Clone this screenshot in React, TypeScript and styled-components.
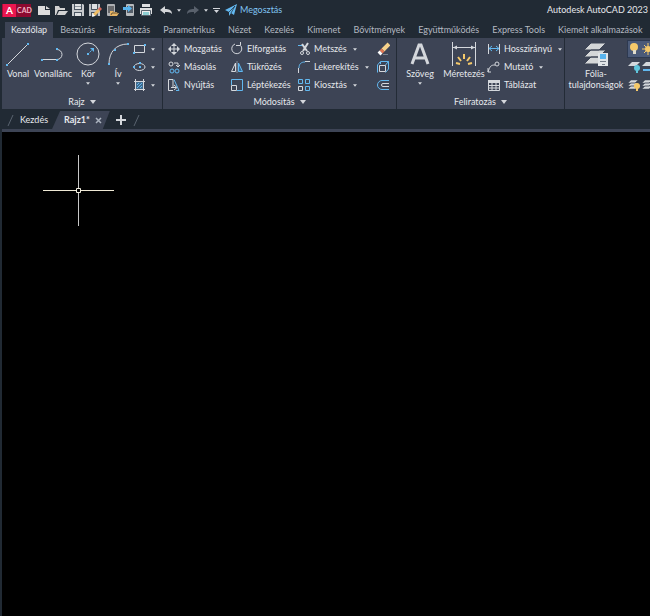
import React from "react";
import styled, { createGlobalStyle, css } from "styled-components";

const color = {
  frame: "#212a34",
  ribbon: "#3d4455",
  edge: "#232b36",
  text: "#e6e8ec",
  muted: "#b4b9c1",
  line: "#d4d7dc",
  blue: "#62b8f0",
  share: "#80c4f2",
  yellow: "#f5c96a",
};

const GlobalStyle = createGlobalStyle`
  * { box-sizing: border-box; }
  body {
    margin: 0;
    background: ${color.frame};
    color: ${color.text};
    font: 9px/12px Lato, "Noto Sans", sans-serif;
    overflow: hidden;
  }
  button {
    margin: 0;
    padding: 0;
    border: 0;
    background: none;
    color: inherit;
    font: inherit;
    white-space: nowrap;
  }
  svg { display: block; flex: none; }
`;

const Window = styled.div`
  display: flex;
  flex-direction: column;
  min-height: 100vh;
  overflow: hidden;
`;

const TitleBar = styled.header`
  display: flex;
  align-items: center;
  height: 20px;
  padding: 0 2px;
`;

const QuickAccess = styled.div<{ $inset: number }>`
  display: flex;
  align-items: center;
  gap: 4px;
  margin-left: ${(p) => p.$inset}px;
`;

const ToolButton = styled.button<{ $narrow?: boolean }>`
  display: flex;
  justify-content: center;
  width: ${(p) => (p.$narrow ? "6px" : "13px")};
`;

const ShareButton = styled.button`
  display: flex;
  align-items: center;
  gap: 3px;
  margin-left: 6px;
  color: ${color.share};
`;

const AppTitle = styled.h1`
  margin: 0 0 0 auto;
  font: inherit;
  white-space: nowrap;
`;

const RibbonTabs = styled.nav`
  display: flex;
  align-items: flex-end;
  gap: 1px;
  height: 18px;
  padding-left: 5px;
`;

const RibbonTab = styled.button<{ $active?: boolean }>`
  flex: none;
  height: 16px;
  padding: 0 6px;
  color: ${color.muted};
  ${(p) =>
    p.$active &&
    css`
      background: ${color.ribbon};
      color: ${color.text};
    `}
`;

const Ribbon = styled.div`
  display: flex;
  height: 71px;
  margin-left: 2px;
  background: ${color.ribbon};
`;

const Panel = styled.section<{ $width?: number }>`
  display: flex;
  flex-direction: column;
  justify-content: space-between;
  flex: ${(p) => (p.$width ? `0 0 ${p.$width}px` : "1 0 0")};
  min-width: 0;
  overflow: hidden;
  padding: 2px 0 0;
  & + & { border-left: 1px solid ${color.edge}; }
`;

const PanelBody = styled.div<{ $inset?: number }>`
  display: flex;
  padding-left: ${(p) => p.$inset ?? 0}px;
`;

const PanelTitle = styled.button`
  display: flex;
  align-items: center;
  justify-content: center;
  gap: 5px;
  height: 14px;
`;

const LargeButton = styled.button<{ $width: number }>`
  display: flex;
  flex-direction: column;
  align-items: center;
  flex: 0 0 ${(p) => p.$width}px;
  height: 52px;
`;

const LargeLabel = styled.span<{ $tight?: boolean }>`
  margin-bottom: 2px;
  line-height: ${(p) => (p.$tight ? "11px" : "12px")};
  text-align: center;
`;

const Column = styled.div<{ $width: number }>`
  display: flex;
  flex-direction: column;
  flex: 0 0 ${(p) => p.$width}px;
`;

const SmallButton = styled.button<{ $gap?: number }>`
  display: flex;
  align-items: center;
  gap: ${(p) => p.$gap ?? 3}px;
  height: 18px;
`;

const ArrowSlot = styled.span`
  margin-left: 3px;
`;

const LayerStates = styled.div`
  display: flex;
  flex-direction: column;
`;

const LayerRow = styled.div<{ $selected?: boolean }>`
  display: flex;
  align-items: center;
  gap: 1px;
  height: 18px;
  background: ${(p) => (p.$selected ? "#4b5a78" : "none")};
  box-shadow: ${(p) => (p.$selected ? "inset 0 0 0 1px #2d3950" : "none")};
`;

const FileTabs = styled.nav`
  display: flex;
  align-items: center;
  height: 20px;
  padding: 2px 0 0 7px;
`;

const FileTab = styled.button`
  padding: 0 4px 0 6px;
`;

const ActiveFileTab = styled.div`
  display: flex;
  align-items: center;
  gap: 5px;
  height: 18px;
  padding: 0 8px 0 12px;
  background: ${color.ribbon};
  clip-path: polygon(8px 0, 100% 0, calc(100% - 7px) 100%, 0 100%);
  font-weight: 700;
`;

const NewTab = styled.button`
  margin: 0 7px 0 6px;
`;

const Drawing = styled.main`
  flex: 1;
  margin-left: 2px;
  padding: 23px 0 0 41px;
  border-top: 3px solid ${color.ribbon};
  background: #000;
`;

type IconProps = { w?: number; h?: number; children: React.ReactNode };
const Icon = ({ w = 14, h = 14, children }: IconProps) => (
  <svg width={w} height={h} viewBox={`0 0 ${w} ${h}`} fill="none" stroke={color.line} aria-hidden="true">
    {children}
  </svg>
);

const Arrow = ({ big }: { big?: boolean }) => (
  <svg width={big ? 6 : 4} height={big ? 4 : 3} viewBox="0 0 6 4" aria-hidden="true">
    <path d="M0 0h6L3 4z" fill={color.line} />
  </svg>
);

const Dot = ({ x, y }: { x: number; y: number }) => (
  <rect x={x - 1} y={y - 1} width="2" height="2" fill={color.blue} stroke="none" />
);

const Logo = styled.button`
  display: flex;
  align-items: center;
  height: 13px;
  background: #8c0a30;
  color: #fff;
  font-size: 7px;
  font-weight: 700;
`;

const LogoMark = styled.span`
  width: 14px;
  margin-right: 1px;
  background: #e9164f;
  font-size: 10px;
  line-height: 13px;
  border-left: 1px solid #a80c3a;
`;

const LogoName = styled.span`
  width: 14px;
  color: #f0b6c6;
`;

const quickTools = [
  {
    label: "Új",
    icon: <path d="M1 3h7v4h5v5H1zM9 3l4 3H9z" fill="#dcdcdc" stroke="none" />,
  },
  {
    label: "Megnyitás",
    icon: <path d="M1 12V3h4l1 2h5v2H4l-2 5zM3 12l2-4h9l-3 4z" fill="#d2d2d2" stroke="none" />,
  },
  {
    label: "Mentés",
    icon: (
      <>
        <path d="M1 1h11l1 1v11H1z" fill="#c9cbce" stroke="none" />
        <path d="M3 1h8v6H3zM3 9h8v4H3z" fill="#4b5561" stroke="none" />
        <path d="M4 1h6v5H4zM4 10h6v3H4z" fill="#dfe1e3" stroke="none" />
        <path d="M4 3.500h6" stroke="#8b929a" />
      </>
    ),
  },
  {
    label: "Mentés másként",
    icon: (
      <>
        <path d="M1 1h11v12H1z" fill="#bfc2c5" stroke="none" />
        <path d="M3 1h7v6H3zM3 9h7v4H3z" fill="#4b5561" stroke="none" />
        <path d="M4 1h5v5H4zM4 10h3v3H4z" fill="#dfe1e3" stroke="none" />
        <path d="M6 12l5-5" stroke="#f1bf67" strokeWidth="3" />
        <path d="M11 7l2-2" stroke="#d9685b" strokeWidth="3" />
        <path d="M4 14l1-3 2 2z" fill="#fff" stroke="none" />
      </>
    ),
  },
  {
    label: "Megnyitás webről és mobilról",
    icon: (
      <>
        <rect x="2" y="1" width="8" height="12" rx="1" fill="#aeb0b3" stroke="none" />
        <path d="M3 3h6v7H3z" fill="#68696c" stroke="none" />
        <path d="M5 13V8h3l1 1h3v1h2l-2 3z" fill="#e6b465" stroke="none" />
        <path d="M6 12l1-2h6" stroke="#6b5638" />
      </>
    ),
  },
  {
    label: "Mentés webre és mobilra",
    icon: (
      <>
        <rect x="4" y="1" width="8" height="12" rx="1" fill="#b7babd" stroke="none" />
        <path d="M5 3h6v7H5z" fill="#555e69" stroke="none" />
        <path d="M1 4h5V2l4 3.500-4 3.500V7H1z" fill="#59b4ee" stroke="none" />
      </>
    ),
  },
  {
    label: "Nyomtatás",
    icon: (
      <>
        <path d="M3 1h8v3H3zM1 5h12v6H1z" fill="#dedfe1" stroke="none" />
        <path d="M2.500 7.500h9v5h-9z" fill="#eee" stroke="#59636e" />
        <path d="M4 9h6v3H4z" fill="#8fcfd3" stroke="none" />
      </>
    ),
  },
];

const undo = <path d="M1 7l5-4v3c4 0 7 1 7 5-2-2-4-2-7-2v2z" />;

const ribbonTabs = [
  "Kezdőlap", "Beszúrás", "Feliratozás", "Parametrikus", "Nézet", "Kezelés", "Kimenet",
  "Bővítmények", "Együttműködés", "Express Tools", "Kiemelt alkalmazások",
];

const drawTools = [
  {
    label: "Vonal", width: 32,
    icon: <><path d="M3 25L24 4" /><Dot x={3} y={25} /><Dot x={24} y={4} /></>,
  },
  {
    label: "Vonallánc", width: 38,
    icon: <><path d="M3 19.500h15a5 5 0 0 0 0-10" /><Dot x={3} y={20} /><Dot x={18} y={20} /><Dot x={18} y={9} /></>,
  },
  {
    label: "Kör", width: 32, menu: true,
    icon: (
      <>
        <circle cx="14" cy="14" r="11" />
        <path d="M14 14l5-5" stroke={color.blue} strokeDasharray="2 1" />
        <path d="M16 8h4v4z" fill={color.blue} stroke="none" />
        <Dot x={14} y={14} />
      </>
    ),
  },
  {
    label: "Ív", width: 26, menu: true,
    icon: <><path d="M5 24C5 12 12 4 24 4" /><Dot x={5} y={24} /><Dot x={11} y={10} /><Dot x={24} y={4} /></>,
  },
];

const shapeTools = [
  {
    label: "Téglalap",
    icon: <><path d="M2.500 3.500h10v7h-10z" /><Dot x={2} y={11} /><Dot x={13} y={3} /></>,
  },
  {
    label: "Ellipszis",
    icon: <><ellipse cx="7.500" cy="7" rx="5.500" ry="3.500" /><Dot x={2} y={7} /><Dot x={8} y={7} /><Dot x={8} y={3} /></>,
  },
  {
    label: "Sraffozás",
    icon: (
      <>
        <path d="M4 4h7v7H4z" fill="#426b8d" stroke="none" />
        <path d="M5 7l2-2M5 10l5-5M8 10l2-2" stroke={color.blue} />
        <path d="M3.500 1v12M11.500 1v12M2 3.500h11M2 11.500h11" />
      </>
    ),
  },
];

type SmallTool = { label: string; icon: React.ReactNode; menu?: boolean };

const modifyColumns: { width: number; tools: SmallTool[] }[] = [
  {
    width: 63,
    tools: [
      {
        label: "Mozgatás",
        icon: (
          <>
            <path d="M2 7h10M7 2v10" />
            <path d="M7 1l3 3H4zM7 13l3-3H4zM1 7l3-3v6zM13 7l-3-3v6z" fill={color.line} stroke="none" />
          </>
        ),
      },
      {
        label: "Másolás",
        icon: (
          <>
            <circle cx="4" cy="4" r="2" /><path d="M7 3h4v3M9 5l2 2 2-2" />
            <circle cx="5" cy="11" r="2" stroke={color.blue} /><circle cx="10" cy="11" r="2" stroke={color.blue} />
          </>
        ),
      },
      {
        label: "Nyújtás",
        icon: (
          <>
            <path d="M6 12.500H1.500v-11H6V9M4 9.500h5M7 7l3 2.500L7 12" />
            <path d="M7 1.500l5 11H9" stroke={color.blue} />
          </>
        ),
      },
    ],
  },
  {
    width: 67,
    tools: [
      { label: "Elforgatás", icon: <path d="M5 2a5 5 0 1 0 6 2M6 3.500h4.500V0" /> },
      {
        label: "Tükrözés",
        icon: (
          <>
            <path d="M5.500 3v8.500H1.500z" /><path d="M8.500 3v8.500h4z" fill="#356b98" stroke={color.blue} /><path d="M7 1v12" stroke="#848d9b" />
          </>
        ),
      },
      {
        label: "Léptékezés",
        icon: <><path d="M1.500 7V1.500h11v11H7" stroke={color.blue} /><path d="M1.500 7.500h5v5h-5z" /></>,
      },
    ],
  },
  {
    width: 79,
    tools: [
      {
        label: "Metszés", menu: true,
        icon: (
          <>
            <path d="M1 3.500h5" stroke={color.blue} />
            <path d="M5 2l5 7M11 1L6 9" strokeWidth="2" />
            <circle cx="5" cy="11" r="1.500" /><circle cx="11" cy="11" r="1.500" />
          </>
        ),
      },
      {
        label: "Lekerekítés", menu: true,
        icon: <><path d="M2 8c0-4 2-6 6-6" stroke={color.blue} /><path d="M1.500 13V8M8 1.500h5" /></>,
      },
      {
        label: "Kiosztás", menu: true,
        icon: (
          <>
            <path d="M1.500 8.500h4v4h-4z" />
            <path d="M1.500 1.500h4v4h-4zM8.500 1.500h4v4h-4zM8.500 8.500h4v4h-4z" stroke={color.blue} />
          </>
        ),
      },
    ],
  },
];

const modifyExtras = [
  {
    label: "Törlés",
    icon: (
      <>
        <path d="M7 8l6-6" stroke="#f6d28b" strokeWidth="4" />
        <path d="M5 10l2-2" stroke="#e27654" strokeWidth="4" />
        <path d="M3 12l2-2" stroke="#fff" strokeWidth="4" />
        <path d="M7 12.500h5" stroke="#778190" />
      </>
    ),
  },
  {
    label: "Szétvetés",
    icon: (
      <>
        <path d="M1.500 5l3-3.500h8V9l-3 3.500M9.500 5l3-3.500M4.500 2v2M1.500 5v7.500" stroke={color.blue} />
        <path d="M3.500 5.500h6v6h-6z" />
      </>
    ),
  },
  {
    label: "Párhuzamos",
    icon: (
      <>
        <path d="M13 2.500H6a4.500 4.500 0 0 0 0 9h7" stroke={color.blue} />
        <path d="M13 5.500H7a1.500 1.500 0 0 0 0 3h6" />
      </>
    ),
  },
];

const annotateTools: SmallTool[] = [
  {
    label: "Hosszirányú", menu: true,
    icon: <><path d="M1.500 2v10M12.500 2v10" /><path d="M2 6.500h10M5 4L2 6.500 5 9M9 4l3 2.500L9 9" stroke={color.blue} /></>,
  },
  {
    label: "Mutató", menu: true,
    icon: <><path d="M1 12c2-6 3-7 7-7M1 8v4h3" /><circle cx="10" cy="4" r="2" /></>,
  },
  {
    label: "Táblázat",
    icon: <><path d="M1.500 2.500h11v10h-11zM1 7.500h12M1 10h12M5 5v7M9 5v7" /><path d="M1 2h12v3H1z" fill={color.line} stroke="none" /></>,
  },
];

const SmallTools = ({ width, tools }: { width: number; tools: SmallTool[] }) => (
  <Column $width={width}>
    {tools.map((t) => (
      <SmallButton key={t.label}>
        <Icon>{t.icon}</Icon>
        {t.label}
        {t.menu && <ArrowSlot><Arrow /></ArrowSlot>}
      </SmallButton>
    ))}
  </Column>
);

const Sheets = () => (
  <path d="M1 11l3-3h7l-3 3zM1 8l3-3h7L8 8zM1 5l3-3h7L8 5z" fill={color.line} stroke={color.ribbon} strokeWidth="0.5" />
);

const Bulb = ({ x, y, fill }: { x: number; y: number; fill: string }) => (
  <>
    <circle cx={x} cy={y} r="3" fill={fill} stroke="none" />
    <path d={`M${x - 1} ${y + 2}h2v3h-2z`} fill={fill} stroke="none" />
  </>
);

const layerRows = [
  {
    label: "Fólia be", selected: true,
    first: <><circle cx="7" cy="5" r="4" fill={color.yellow} stroke="none" /><path d="M6 8h3v4H6z" fill="#e2ddcb" stroke="none" /></>,
    second: <><circle cx="7" cy="7" r="3" fill={color.yellow} stroke="none" /><path d="M7 1v12M1 7h12M3 3l8 8M11 3l-8 8" stroke={color.yellow} /></>,
  },
  {
    label: "Fólia kikapcsolása", selected: false,
    first: <><path d="M1 6l4-4h8L9 6z" fill={color.line} stroke="none" /><Bulb x={10} y={8} fill="#5fc5dc" /></>,
    second: <><path d="M1 6l4-4h8L9 6z" fill={color.line} stroke="none" /><path d="M2 10h7" stroke={color.blue} strokeWidth="2" /></>,
  },
  {
    label: "Fóliák bekapcsolása", selected: false,
    first: <><Sheets /><Bulb x={10} y={8} fill={color.yellow} /></>,
    second: <Sheets />,
  },
];

const Slash = () => (
  <Icon w={7} h={13}><path d="M1 12L6 1" stroke="#59636f" /></Icon>
);

export default function App() {
  return (
    <Window>
      <GlobalStyle />
      <TitleBar>
        <Logo aria-label="AutoCAD menü">
          <LogoMark>A</LogoMark>
          <LogoName>CAD</LogoName>
        </Logo>
        <QuickAccess $inset={6}>
          {quickTools.map((t) => (
            <ToolButton key={t.label} aria-label={t.label}><Icon>{t.icon}</Icon></ToolButton>
          ))}
        </QuickAccess>
        <QuickAccess $inset={7}>
          <ToolButton aria-label="Visszavonás"><Icon><g fill="#d5d7da" stroke="none">{undo}</g></Icon></ToolButton>
          <ToolButton $narrow aria-label="Visszavonási lista"><Arrow /></ToolButton>
          <ToolButton aria-label="Ismét">
            <Icon><g fill="#59616c" stroke="none" transform="matrix(-1 0 0 1 14 0)">{undo}</g></Icon>
          </ToolButton>
          <ToolButton $narrow aria-label="Ismétlési lista"><Arrow /></ToolButton>
          <ToolButton $narrow aria-label="Eszköztár testreszabása">
            <Icon w={7} h={7}><path d="M0 1.500h7" /><path d="M1 3h5L3.500 6z" fill={color.line} stroke="none" /></Icon>
          </ToolButton>
        </QuickAccess>
        <ShareButton>
          <Icon w={12} h={12}>
            <path d="M0 6L12 0 9 11 6 9l-2 3V8z" fill={color.blue} stroke="none" />
            <path d="M4 8l6-6-4 7" stroke={color.frame} strokeWidth="0.7" />
          </Icon>
          Megosztás
        </ShareButton>
        <AppTitle>Autodesk AutoCAD 2023</AppTitle>
      </TitleBar>

      <RibbonTabs>
        {ribbonTabs.map((t, i) => <RibbonTab key={t} $active={i === 0}>{t}</RibbonTab>)}
      </RibbonTabs>

      <Ribbon>
        <Panel $width={160}>
          <PanelBody>
            {drawTools.map((t) => (
              <LargeButton key={t.label} $width={t.width}>
                <Icon w={28} h={28}>{t.icon}</Icon>
                <LargeLabel>{t.label}</LargeLabel>
                {t.menu && <Arrow />}
              </LargeButton>
            ))}
            <Column $width={26}>
              {shapeTools.map((t) => (
                <SmallButton key={t.label} $gap={4} aria-label={t.label}><Icon w={15}>{t.icon}</Icon><Arrow /></SmallButton>
              ))}
            </Column>
          </PanelBody>
          <PanelTitle>Rajz <Arrow big /></PanelTitle>
        </Panel>

        <Panel $width={234}>
          <PanelBody $inset={4}>
            {modifyColumns.map((c) => <SmallTools key={c.width} width={c.width} tools={c.tools} />)}
            <Column $width={16}>
              {modifyExtras.map((t) => (
                <SmallButton key={t.label} aria-label={t.label}><Icon>{t.icon}</Icon></SmallButton>
              ))}
            </Column>
          </PanelBody>
          <PanelTitle>Módosítás <Arrow big /></PanelTitle>
        </Panel>

        <Panel $width={168}>
          <PanelBody $inset={2}>
            <LargeButton $width={42}>
              <Icon w={28} h={28}>
                <path d="M6 24L13 5h2l7 19M9 18h10" strokeWidth="3" />
              </Icon>
              <LargeLabel>Szöveg</LargeLabel>
              <Arrow />
            </LargeButton>
            <LargeButton $width={46}>
              <Icon w={28} h={28}>
                <path d="M2.500 2v24M25.500 2v24M3 7.500h22" />
                <path d="M3 7.500l4-2v4zM25 7.500l-4-2v4z" fill={color.line} stroke="none" />
                <path d="M6 23l4 1M8 17l3 4M14 14v5M20 17l-3 4M22 23l-4 1" stroke={color.yellow} strokeWidth="2" />
              </Icon>
              <LargeLabel>Méretezés</LargeLabel>
            </LargeButton>
            <SmallTools width={77} tools={annotateTools} />
          </PanelBody>
          <PanelTitle>Feliratozás <Arrow big /></PanelTitle>
        </Panel>

        <Panel>
          <PanelBody>
            <LargeButton $width={62}>
              <Icon w={28} h={28}>
                <path d="M2 24l7-7h15l-7 7zM2 17l7-7h15l-7 7zM2 10l7-7h15l-7 7z" fill="#d5d7d8" stroke={color.ribbon} />
                <path d="M16 13h10v13H16z" fill="#e1e5e8" stroke="none" />
                <path d="M18 14h6v5h-6z" fill="#59b4ee" stroke="none" />
                <path d="M18 21.500h6M20 24.500h3" stroke="#747d89" />
              </Icon>
              <LargeLabel $tight>Fólia-<br />tulajdonságok</LargeLabel>
            </LargeButton>
            <LayerStates>
              {layerRows.map((r) => (
                <LayerRow key={r.label} $selected={r.selected}>
                  <ToolButton aria-label={r.label}><Icon>{r.first}</Icon></ToolButton>
                  <ToolButton aria-label={`${r.label} 2`}><Icon>{r.second}</Icon></ToolButton>
                </LayerRow>
              ))}
            </LayerStates>
          </PanelBody>
        </Panel>
      </Ribbon>

      <FileTabs>
        <Slash />
        <FileTab>Kezdés</FileTab>
        <ActiveFileTab>
          Rajz1*
          <button aria-label="Rajz1 bezárása">
            <Icon w={7} h={7}><path d="M1 1l5 5M6 1L1 6" stroke="#aab2be" strokeWidth="1.500" /></Icon>
          </button>
        </ActiveFileTab>
        <NewTab aria-label="Új rajz">
          <Icon w={10} h={10}><path d="M5 0v10M0 5h10" strokeWidth="2" /></Icon>
        </NewTab>
        <Slash />
      </FileTabs>

      <Drawing>
        <Icon w={71} h={71}>
          <path d="M0 35.500h33M38 35.500h33" stroke="#efe9d5" />
          <path d="M35.500 0v33M35.500 38v33" stroke="#c8c8c8" />
          <path d="M33.500 33.500h4v4h-4z" stroke="#f2eedf" />
        </Icon>
      </Drawing>
    </Window>
  );
}
